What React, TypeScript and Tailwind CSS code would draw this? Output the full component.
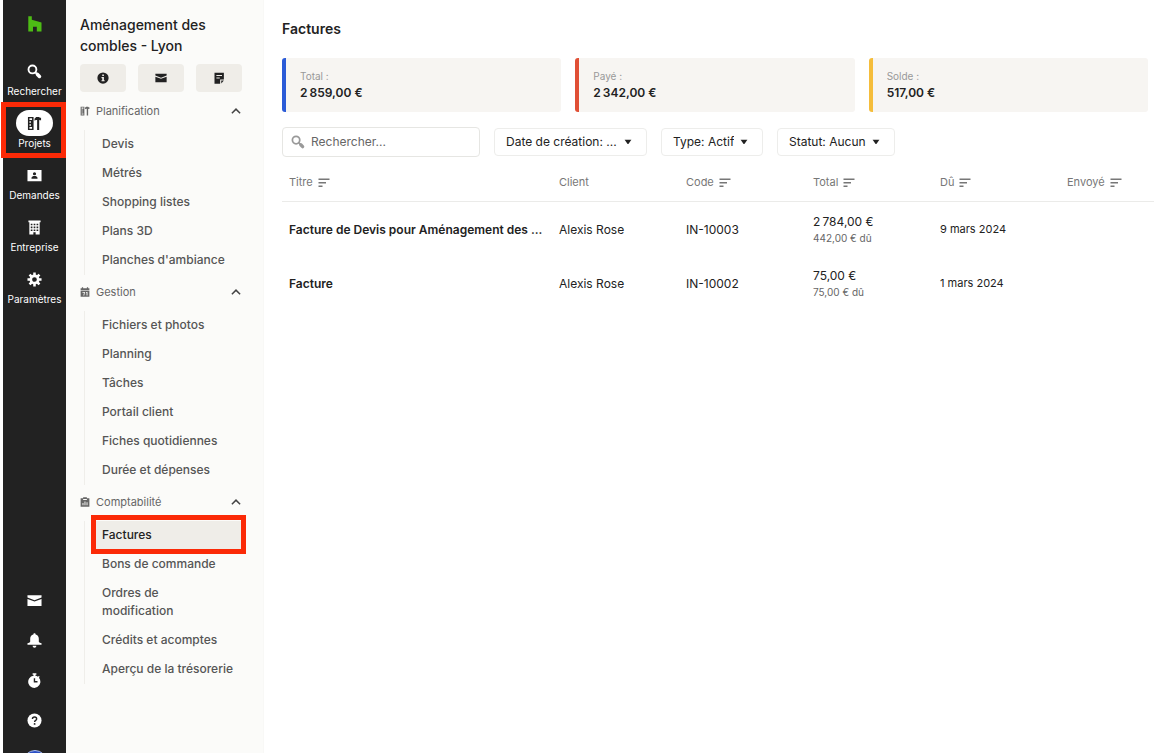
import { useState } from 'react';
import type { ReactNode } from 'react';
import clsx from 'clsx';

interface IconProps {
	className?: string;
}

const HouzzIcon = ({ className }: IconProps) => (
	<svg viewBox="0 0 14 16" fill="currentColor" className={className}>
		<path d="M.3.300h3.500v3.500l9.700 2.800V15.500H8.800v-4.700H5v4.700H.3z" />
	</svg>
);

const SearchIcon = ({ className }: IconProps) => (
	<svg
		viewBox="0 0 16 16"
		fill="none"
		stroke="currentColor"
		className={className}
	>
		<circle cx="5.800" cy="5.800" r="4.200" strokeWidth="2" />
		<path d="M8.800 8.800l2.500 2.500" strokeWidth="2" />
		<path d="M11.200 11.200l2.100 2.100" strokeWidth="3.800" strokeLinecap="round" />
	</svg>
);

const ToolsIcon = ({ className }: IconProps) => (
	<svg viewBox="0 0 16 16" fill="currentColor" className={className}>
		<path
			fillRule="evenodd"
			d="M1 1h6v14H1zM2.600 2.500v1.700h2.800V2.500zM2.600 5.600v1.700h1.600V5.600zM2.600 8.700v1.700h1.600V8.700zM2.600 11.800v1.700h2.800v-1.700z"
		/>
		<path d="M8 2.800L9.800 1h3.200l.6.900H15v2.700h-1.400l-.6-.700V15h-2.200V4.200H9.400L8 5z" />
	</svg>
);

const ContactIcon = ({ className }: IconProps) => (
	<svg viewBox="0 0 16 16" fill="currentColor" className={className}>
		<path
			fillRule="evenodd"
			d="M0.500 2h15v12H0.500zM8 4.400a1.700 1.700 0 1 0 0 3.400a1.700 1.700 0 1 0 0-3.400zM4.800 11.400h6.400v-.8c0-1.300-1.700-2-3.200-2s-3.200.7-3.200 2z"
		/>
	</svg>
);

const BuildingIcon = ({ className }: IconProps) => (
	<svg viewBox="0 0 16 16" fill="currentColor" className={className}>
		<path
			fillRule="evenodd"
			d="M1.500 .5h13v2h-1V15.500H9.200V13H6.800v2.500H2.500V2.500h-1zM4 4v1.700h1.800V4zM7.100 4v1.700h1.800V4zM10.200 4v1.700H12V4zM4 7v1.700h1.800V7zM7.100 7v1.700h1.800V7zM10.200 7v1.700H12V7zM4 10v1.700h1.800V10zM7.100 10v1.700h1.800V10zM10.200 10v1.700H12V10z"
		/>
	</svg>
);

const GearIcon = ({ className }: IconProps) => (
	<svg viewBox="0 0 16 16" fill="none" stroke="currentColor" className={className}>
		<circle cx="8" cy="8" r="3.900" strokeWidth="2.800" />
		<path
			d="M8 .5v3M8 12.500v3M.5 8h3M12.500 8h3M2.700 2.700l2.100 2.100M11.200 11.200l2.100 2.100M2.700 13.300l2.100-2.100M11.200 4.800l2.100-2.100"
			strokeWidth="2.700"
		/>
	</svg>
);

const MailIcon = ({ className }: IconProps) => (
	<svg viewBox="0 0 16 16" fill="currentColor" className={className}>
		<path d="M.5 2.300h15v2.500L8 7.600.5 4.800z" />
		<path d="M.5 6.300L8 9l7.500-2.700v7.500H.5z" />
	</svg>
);

const BellIcon = ({ className }: IconProps) => (
	<svg viewBox="0 0 16 16" fill="currentColor" className={className}>
		<path d="M8 .3c.8 0 1.200.5 1.200 1.200C11.400 2 12.600 3.700 12.600 6v3.300c.3 1 1.700 1.300 2.900 1.700v1.500H.5V11c1.200-.4 2.600-.7 2.900-1.700V6c0-2.300 1.200-4 3.400-4.500C6.800.8 7.200.3 8 .3z" />
		<path d="M6 13.600h4c0 1.300-.9 2.100-2 2.100s-2-.8-2-2.100z" />
	</svg>
);

const TimerIcon = ({ className }: IconProps) => (
	<svg viewBox="0 0 16 16" fill="currentColor" className={className}>
		<path
			fillRule="evenodd"
			d="M6 .3h4v1.500H9v1.100c1 .1 1.900.5 2.600 1.100l1-.9 1 1-.9 1A6.500 6.500 0 1 1 7 2.900V1.800H6zM7.200 5.600v4.500h4V8.600H8.700v-3z"
		/>
	</svg>
);

const HelpIcon = ({ className }: IconProps) => (
	<svg viewBox="0 0 16 16" fill="none" className={className}>
		<circle cx="8" cy="8" r="7.500" fill="currentColor" />
		<path
			d="M5.800 6.500c0-1.400 1-2.200 2.300-2.200s2.200.8 2.200 2c0 1.600-2.200 1.600-2.200 3.200"
			stroke="#222"
			strokeWidth="1.500"
		/>
		<circle cx="8.100" cy="11.600" r="1" fill="#222" />
	</svg>
);

const InfoIcon = ({ className }: IconProps) => (
	<svg viewBox="0 0 16 16" fill="currentColor" className={className}>
		<path
			fillRule="evenodd"
			d="M8 .5a7.500 7.500 0 1 0 0 15a7.500 7.500 0 1 0 0-15zM7 3.400h2.200v2H7zM6 6.700h3.200v4.200h1v1.500H6v-1.500h1V8.200H6z"
		/>
	</svg>
);

const NoteIcon = ({ className }: IconProps) => (
	<svg viewBox="0 0 16 16" fill="currentColor" className={className}>
		<path
			fillRule="evenodd"
			d="M2 1h12.500v9H9.500v5.500H2zM4.500 4v1.400h7.500V4zM4.500 7.300v1.400h4.500V7.300z"
		/>
		<path d="M11 11.300h3.500L11 15.300z" />
	</svg>
);

const CalendarIcon = ({ className }: IconProps) => (
	<svg viewBox="0 0 16 16" fill="currentColor" className={className}>
		<path d="M1 2h2V.5h2V2h6V.5h2V2h2v3H1z" />
		<path
			fillRule="evenodd"
			d="M1 6h14v9.500H1zM4 8v1.300h2.500L5.300 13.500h1.500L8 8zM9.500 8v1.300h1v4.200H12V8z"
		/>
	</svg>
);

const ClipboardIcon = ({ className }: IconProps) => (
	<svg viewBox="0 0 16 16" fill="currentColor" className={className}>
		<path
			fillRule="evenodd"
			d="M1 2h4V.5h6V2h4v13.500H1zM5 3.200v1.500h6V3.200zM4 9.500v3.500h1.500V9.500zM7.200 7v6h1.500V7zM10.500 8.500V13H12V8.500z"
		/>
	</svg>
);

const ChevronUpIcon = ({ className }: IconProps) => (
	<svg viewBox="0 0 10 6" fill="none" stroke="currentColor" className={className}>
		<path d="M.9 5.200L5 1.100l4.100 4.100" strokeWidth="1.500" />
	</svg>
);

const CaretIcon = ({ className }: IconProps) => (
	<svg viewBox="0 0 8 6" fill="currentColor" className={className}>
		<path d="M.6.800h6.800L4.600 4.700q-.6.700-1.200 0z" />
	</svg>
);

const SortIcon = ({ className }: IconProps) => (
	<svg viewBox="0 0 12 10" fill="currentColor" className={className}>
		<path d="M.5.500h11V2H.5zM.5 4h7.500v1.500H.5zM.5 7.500h4V9h-4z" />
	</svg>
);

const RAIL_ITEMS = [
	{ label: 'Rechercher', icon: SearchIcon },
	{ label: 'Projets', icon: ToolsIcon, active: true },
	{ label: 'Demandes', icon: ContactIcon },
	{ label: 'Entreprise', icon: BuildingIcon },
	{ label: 'Paramètres', icon: GearIcon },
];

const RAIL_ACTIONS = [
	{ label: 'Messages', icon: MailIcon },
	{ label: 'Notifications', icon: BellIcon },
	{ label: 'Minuteur', icon: TimerIcon },
	{ label: 'Aide', icon: HelpIcon },
];

const PROJECT_ACTIONS = [
	{ label: 'Informations', icon: InfoIcon },
	{ label: 'Message', icon: MailIcon },
	{ label: 'Notes', icon: NoteIcon },
];

const SECTIONS = [
	{
		title: 'Planification',
		icon: ToolsIcon,
		items: [
			'Devis',
			'Métrés',
			'Shopping listes',
			'Plans 3D',
			"Planches d'ambiance",
		],
	},
	{
		title: 'Gestion',
		icon: CalendarIcon,
		items: [
			'Fichiers et photos',
			'Planning',
			'Tâches',
			'Portail client',
			'Fiches quotidiennes',
			'Durée et dépenses',
		],
	},
	{
		title: 'Comptabilité',
		icon: ClipboardIcon,
		items: [
			'Factures',
			'Bons de commande',
			'Ordres de modification',
			'Crédits et acomptes',
			'Aperçu de la trésorerie',
		],
	},
];

const SUMMARY = [
	{ label: 'Total :', value: '2\u202f859,00 €', border: 'border-[#2b5bd7]' },
	{ label: 'Payé :', value: '2\u202f342,00 €', border: 'border-[#e04f35]' },
	{ label: 'Solde :', value: '517,00 €', border: 'border-[#f5bd3b]' },
];

const COLUMNS = [
	{ label: 'Titre', sortable: true, width: '' },
	{ label: 'Client', sortable: false, width: 'w-[127px]' },
	{ label: 'Code', sortable: true, width: 'w-[127px]' },
	{ label: 'Total', sortable: true, width: 'w-[127px]' },
	{ label: 'Dû', sortable: true, width: 'w-[127px]' },
	{ label: 'Envoyé', sortable: true, width: 'w-[94px]' },
];

const INVOICES = [
	{
		title: 'Facture de Devis pour Aménagement des ...',
		client: 'Alexis Rose',
		code: 'IN-10003',
		total: '2\u202f784,00 €',
		due: '442,00 € dû',
		date: '9 mars 2024',
	},
	{
		title: 'Facture',
		client: 'Alexis Rose',
		code: 'IN-10002',
		total: '75,00 €',
		due: '75,00 € dû',
		date: '1 mars 2024',
	},
];

// Red frame laid over the element that it surrounds
const Highlight = ({ className }: IconProps) => (
	<span
		className={clsx(
			'pointer-events-none absolute z-10 border-[5px] border-[#fb2a07]',
			className
		)}
	/>
);

function Rail() {
	return (
		<nav className="ml-[3px] flex w-[63px] shrink-0 flex-col bg-[#222] text-white">
			<a
				href="#accueil"
				aria-label="Accueil"
				className="flex h-12 items-center justify-center text-[#4dbc15]"
			>
				<HouzzIcon className="h-4 w-3.5" />
			</a>
			<div className="flex flex-col pt-1.5">
				{RAIL_ITEMS.map(({ label, icon: Icon, active }) => (
					<a
						key={label}
						href={`#${label}`}
						className="relative flex h-[52px] flex-col items-center pt-1 text-[10px] leading-[14px]"
					>
						<span
							className={clsx(
								'flex h-[26px] w-[37px] items-center justify-center rounded-full',
								active && 'bg-white text-[#222]'
							)}
						>
							<Icon className="size-[15px]" />
						</span>
						{label}
						{active && (
							<Highlight className="-left-0.5 -top-1 right-0 h-14" />
						)}
					</a>
				))}
			</div>
			<div className="mt-auto flex h-[173px] shrink-0 flex-col overflow-hidden">
				{RAIL_ACTIONS.map(({ label, icon: Icon }) => (
					<button
						key={label}
						type="button"
						aria-label={label}
						className="flex h-10 shrink-0 items-center justify-center"
					>
						<Icon className="size-[15px]" />
					</button>
				))}
				<button
					type="button"
					aria-label="Compte"
					className="mx-auto mt-2.5 size-6 shrink-0 rounded-full border border-[#a9bdf0] bg-[#2b4fc4]"
				/>
			</div>
		</nav>
	);
}

interface SectionProps {
	title: string;
	icon: (props: IconProps) => ReactNode;
	items: string[];
	current: string;
	onSelect: (item: string) => void;
}

function Section({ title, icon: Icon, items, current, onSelect }: SectionProps) {
	const [open, setOpen] = useState(true);

	return (
		<section>
			<button
				type="button"
				aria-expanded={open}
				onClick={() => setOpen(!open)}
				className="flex h-9 w-full items-center gap-1.5 pb-0.5 text-[11px] text-[#666]"
			>
				<Icon className="size-2.5" />
				{title}
				<ChevronUpIcon
					className={clsx(
						'ml-auto mr-px h-1.5 w-2.5 text-[#444]',
						!open && 'rotate-180'
					)}
				/>
			</button>
			{open && (
				<ul className="ml-1 border-l border-[#efeeea] pl-[11px]">
					{items.map((item) => (
						<li key={item} className="relative">
							<a
								href={`#${item}`}
								onClick={() => onSelect(item)}
								className={clsx(
									'block pb-1.5 pl-1.5 pr-1 pt-[5px] text-xs font-medium leading-[18px]',
									item === current
										? 'bg-[#efede8] text-[#222]'
										: 'text-[#555]'
								)}
							>
								{item === 'Ordres de modification' ? (
									<>
										Ordres de
										<br />
										modification
									</>
								) : (
									item
								)}
							</a>
							{item === current && (
								<Highlight className="-bottom-1 -left-[5px] -right-1 -top-1.5" />
							)}
						</li>
					))}
				</ul>
			)}
		</section>
	);
}

function ProjectPanel() {
	const [current, setCurrent] = useState('Factures');

	return (
		<aside className="w-[198px] shrink-0 overflow-hidden border-r border-[#f8f8f6] bg-[#fbfbf9] pl-3.5 pr-[21px] pt-3.5">
			<h2 className="text-sm font-medium leading-[21px] text-[#222]">
				Aménagement des combles - Lyon
			</h2>
			<div className="mb-0.5 mt-2 grid grid-cols-3 gap-3">
				{PROJECT_ACTIONS.map(({ label, icon: Icon }) => (
					<button
						key={label}
						type="button"
						aria-label={label}
						className="flex h-7 items-center justify-center rounded-sm bg-[#efede8] text-[#222]"
					>
						<Icon className="size-3" />
					</button>
				))}
			</div>
			{SECTIONS.map((section) => (
				<Section
					key={section.title}
					{...section}
					current={current}
					onSelect={setCurrent}
				/>
			))}
		</aside>
	);
}

interface FilterProps {
	label: string;
	text: string;
	className?: string;
}

function Filter({ label, text, className }: FilterProps) {
	return (
		<div className={clsx('relative h-7', className)}>
			<select
				aria-label={label}
				className="h-full w-full appearance-none rounded-sm border border-[#ededeb] bg-white pl-[11px] pr-7 text-xs text-[#222]"
			>
				<option>{text}</option>
			</select>
			<CaretIcon className="pointer-events-none absolute right-[15px] top-[11px] h-1.5 w-2 text-[#222]" />
		</div>
	);
}

function InvoiceTable() {
	return (
		<table className="mt-2 w-full table-fixed text-left text-xs text-[#222]">
			<thead>
				<tr className="h-9 border-b border-[#ebebe9] text-[11px] text-[#777]">
					{COLUMNS.map(({ label, sortable, width }) => (
						<th
							key={label}
							scope="col"
							className={clsx('pl-[7px] font-normal', width)}
						>
							{sortable ? (
								<button type="button" className="flex items-center gap-[5px]">
									{label}
									<SortIcon className="h-2.5 w-3" />
								</button>
							) : (
								label
							)}
						</th>
					))}
				</tr>
			</thead>
			<tbody>
				{INVOICES.map((invoice) => (
					<tr key={invoice.code} className="h-[54px]">
						<td className="truncate pl-[7px] pt-[3px] font-semibold">
							{invoice.title}
						</td>
						<td className="pl-[7px] pt-[3px]">{invoice.client}</td>
						<td className="pl-[7px] pt-[3px]">{invoice.code}</td>
						<td className="pl-[7px] pt-[3px]">
							<div className="leading-[17px]">{invoice.total}</div>
							<div className="text-[10px] leading-4 text-[#666]">
								{invoice.due}
							</div>
						</td>
						<td className="pl-[7px] pt-[3px] text-[11px]">{invoice.date}</td>
						<td />
					</tr>
				))}
			</tbody>
		</table>
	);
}

export default function App() {
	return (
		<div className="flex h-screen overflow-hidden bg-white font-['Inter','Liberation_Sans',sans-serif]">
			<Rail />
			<ProjectPanel />
			<main className="min-w-0 flex-1 pl-[18px] pt-[18px]">
				<h1 className="text-sm font-semibold leading-[22px] text-[#222]">
					Factures
				</h1>
				<div className="mr-1.5 mt-[18px] grid grid-cols-3 gap-3.5">
					{SUMMARY.map(({ label, value, border }) => (
						<div
							key={label}
							className={clsx(
								'h-[54px] rounded-[3px] border-l-4 bg-[#f7f5f2] pl-3.5 pt-2.5',
								border
							)}
						>
							<div className="text-[10px] leading-4 text-[#999]">{label}</div>
							<div className="text-xs font-semibold leading-[17px] text-[#222]">
								{value}
							</div>
						</div>
					))}
				</div>
				<div className="mt-[15px] flex items-center gap-3.5">
					<label className="flex h-[30px] w-[198px] items-center gap-1.5 rounded-sm border border-[#e6e6e3] px-2 text-[#999]">
						<SearchIcon className="size-3.5 shrink-0" />
						<input
							type="text"
							aria-label="Rechercher"
							placeholder="Rechercher..."
							className="w-full min-w-0 text-xs text-[#222] outline-none placeholder:text-[#666]"
						/>
					</label>
					<Filter
						label="Date de création"
						text="Date de création: ..."
						className="w-[153px]"
					/>
					<Filter label="Type" text="Type: Actif" className="w-[102px]" />
					<Filter label="Statut" text="Statut: Aucun" className="w-[118px]" />
				</div>
				<InvoiceTable />
			</main>
		</div>
	);
}
